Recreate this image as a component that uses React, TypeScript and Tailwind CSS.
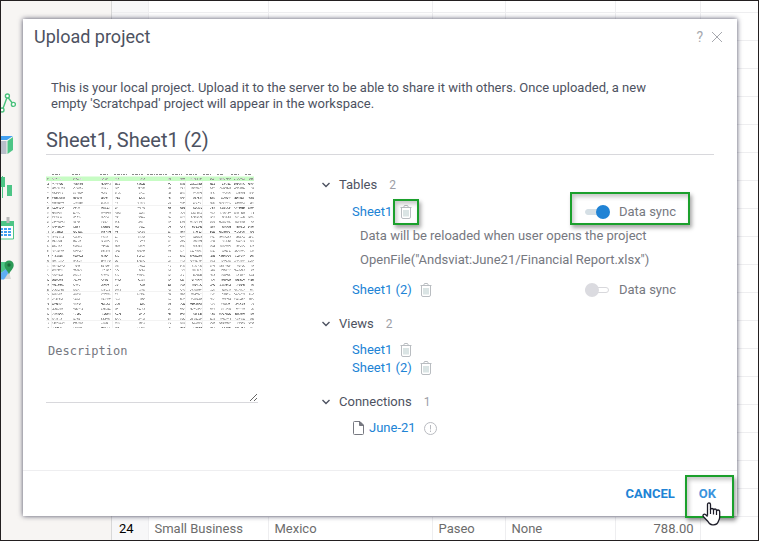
import { useState } from "react";

const columns = [
  { width: "w-[120px]", text: "Small Business", align: "text-left" },
  { width: "w-[164px]", text: "Mexico", align: "text-left" },
  { width: "w-[73px]", text: "Paseo", align: "text-left" },
  { width: "w-[110px]", text: "None", align: "text-left" },
  { width: "w-[85px]", text: "788.00", align: "text-right" },
];

function ChartIcon() {
  return (
    <svg width="15" height="24" viewBox="0 0 15 24" fill="none" stroke="#48c07b" strokeWidth="1.4">
      <path d="M2 17.5 L5.8 7 M7.2 6.8 L11.5 12.2" />
      <circle cx="6.4" cy="5" r="2" fill="#fff" />
      <circle cx="12.4" cy="13.4" r="2" fill="#fff" />
      <circle cx="1" cy="19" r="2" fill="#fff" />
    </svg>
  );
}

function CubeIcon() {
  return (
    <svg width="15" height="24" viewBox="0 0 15 24">
      <path d="M0 3 H12 L6 7 H0Z" fill="#42a0f0" />
      <path d="M12 4 V17 L6.500 21 V8Z" fill="#4dc586" />
      <rect y="8" width="5.500" height="13" fill="#b9bfca" />
    </svg>
  );
}

function CandlesIcon() {
  return (
    <svg width="15" height="24" viewBox="0 0 15 24" fill="#4dc586">
      <rect x="0" y="2" width="4" height="10" />
      <rect x="1" y="1" width="1" height="22" />
      <rect x="6" y="10" width="5" height="11" />
    </svg>
  );
}

function CalendarIcon() {
  return (
    <svg width="15" height="24" viewBox="0 0 15 24">
      <path d="M0 4 H13 V22.500 H0Z" fill="#fff" />
      <path d="M0 4 H13 V9 H0Z" fill="#4dc586" />
      <path d="M0 22 H12.500 V5" fill="none" stroke="#4dc586" />
      <rect x="5.500" y="0" width="3" height="6" fill="#b9b9b9" />
      <g fill="#42a0f0">
        <rect x="0" y="11" width="2" height="2" />
        <rect x="3" y="11" width="3" height="2" />
        <rect x="7" y="11" width="3" height="2" />
        <rect x="0" y="14" width="2" height="2" />
        <rect x="3" y="14" width="3" height="2" />
        <rect x="7" y="14" width="3" height="2" />
        <rect x="0" y="17" width="2" height="2" />
        <rect x="3" y="17" width="3" height="2" />
        <rect x="7" y="17" width="3" height="2" />
      </g>
    </svg>
  );
}

function MapIcon() {
  return (
    <svg width="15" height="24" viewBox="0 0 15 24">
      <path d="M0 3 H6 V10 L0 14Z" fill="#4dc586" />
      <path d="M0 16 L7 9 L10 20 H0Z" fill="#fff" />
      <path d="M2 20 L8 13 L10 20Z" fill="#d9d6d3" />
      <path d="M0 14 L5 10 L8 13 L3 20.500 H0Z" fill="#5eaef3" />
      <path d="M8 15.500 C7 12 3.500 10 3.500 6 A4.600 4.600 0 0 1 12.700 6 C12.700 10 9 12 8 15.500Z" fill="#2c9a57" />
      <circle cx="8" cy="6" r="1.700" fill="#1d6b3b" />
    </svg>
  );
}

function TrashIcon() {
  return (
    <svg width="12" height="14" viewBox="0 0 12 14" fill="none" stroke="#b9bdc1">
      <path d="M0.500 2.500 H11.500 M3.500 2.500 L4.500 0.500 H7.500 L8.500 2.500 M1.500 3 V12 Q1.500 13.500 3 13.500 H9 Q10.500 13.500 10.500 12 V3" />
      <path d="M4 5 V11.500 M6 5 V11.500 M8 5 V11.500" stroke="#b5c9c9" />
    </svg>
  );
}

function Chevron() {
  return (
    <svg width="10" height="6" viewBox="0 0 10 6" fill="none" stroke="#4d5261" strokeWidth="1.400">
      <path d="M1.500 1 L5 4.500 L8.500 1" />
    </svg>
  );
}

function SectionHead({ title, count }: { title: string; count: number }) {
  return (
    <button type="button" className="flex h-[18px] items-center text-[#4d5261]">
      <Chevron />
      <span className="ml-2">{title}</span>
      <span className="ml-3 text-xs text-[#9c9ea6]">{count}</span>
    </button>
  );
}

function Highlight({ className }: { className: string }) {
  return (
    <span
      className={`pointer-events-none absolute border-2 border-[#1ba02c] shadow-[2px_3px_4px_rgba(0,0,0,0.35),inset_2px_3px_4px_rgba(0,0,0,0.22)] ${className}`}
    />
  );
}

function Item({ name, marked = false }: { name: string; marked?: boolean }) {
  return (
    <div className="flex h-[18px] items-center gap-2">
      <a href="#sheet" className="text-[#2083d5]">{name}</a>
      <button type="button" aria-label={`Remove ${name}`} className="relative">
        <TrashIcon />
        {marked && <Highlight className="-inset-x-[7px] -inset-y-[6px]" />}
      </button>
    </div>
  );
}

function SyncSwitch({ initial, marked = false }: { initial: boolean; marked?: boolean }) {
  const [on, setOn] = useState(initial);
  return (
    <label className="relative flex h-[18px] items-center gap-[10px] text-[#76787f]">
      <input
        type="checkbox"
        checked={on}
        onChange={() => setOn(!on)}
        className="relative h-[6px] w-6 appearance-none rounded-full border border-[#d8d8dc] bg-white before:absolute before:-top-[5px] before:-left-px before:size-[14px] before:rounded-full before:bg-[#dbdbe0] checked:border-[#d5dfe5] checked:bg-[#d5dfe5] checked:before:left-[10px] checked:before:bg-[#2083d5]"
      />
      Data sync
      {marked && <Highlight className="-top-[11px] -right-[14px] -bottom-[4px] -left-[15px]" />}
    </label>
  );
}

const previewColumns = [
  { x: 1, w: 2 },
  { x: 6, w: 13 },
  { x: 27, w: 10 },
  { x: 55, w: 10 },
  { x: 69, w: 6 },
  { x: 91, w: 8, right: true },
  { x: 122, w: 3, right: true },
  { x: 134, w: 5, right: true },
  { x: 144, w: 12, right: true },
  { x: 164, w: 5, right: true },
  { x: 173, w: 12, right: true },
  { x: 188, w: 11, right: true },
  { x: 202, w: 6, right: true },
];

const previewHead = [
  [6, 8], [26, 8], [54, 9], [68, 13], [86, 11], [101, 21], [126, 10], [140, 12], [157, 9], [171, 6], [185, 8], [199, 7],
];

const shades = ["#888", "#c4c4c4", "#a6a6a6", "#dcdcdc", "#707070", "#cfcfcf", "#b0b0b0", "#e6e6e6", "#999"];

function noise(a: number, b: number, c: number) {
  const v = Math.sin(a * 12.9898 + b * 78.233 + c * 37.719) * 43758.5453;
  return v - Math.floor(v);
}

function Preview() {
  const marks = [];
  for (let row = 0; row < 32; row++) {
    const y = Math.round(3.8 + row * 4.82);
    const strength = row % 5 === 1 || row % 6 === 4 ? 1 : 0.7;
    previewColumns.forEach((col, c) => {
      const width = col.w <= 5 ? col.w : col.w - Math.floor(noise(row, c, 99) * 4);
      const start = col.right ? col.x + col.w - width : col.x;
      for (let x = 0; x < width; x++) {
        for (let dy = 0; dy < 2; dy++) {
          const k = Math.floor(noise(row, c * 20 + x, dy) * 11);
          if (k > 8) continue;
          marks.push(
            <rect
              key={`${row}-${c}-${x}-${dy}`}
              x={start + x}
              y={y + dy}
              width="1"
              height="1"
              fill={shades[k]}
              opacity={strength}
            />,
          );
        }
      }
    });
  }
  return (
    <svg viewBox="0 0 208 154" className="h-[154px] w-[208px]" role="img" aria-label="Sheet preview">
      <rect y="2.500" width="208" height="4.500" fill="#c7fcc4" />
      {[32, 60, 89, 118, 147].map((y) => (
        <rect key={y} y={y - 1} width="208" height="1" fill="#f3f3f3" />
      ))}
      <path d="M5.500 7 V154 M66.500 7 V154 M139.500 7 V154 M156.500 7 V154" stroke="#f3f3f3" />
      {previewHead.map(([x, w]) => (
        <path key={x} d={`M${x} 0.500 H${x + w}`} stroke="#888" strokeDasharray="2 1 3 1 1 1" />
      ))}
      {marks}
    </svg>
  );
}

function HandCursor() {
  return (
    <svg width="19" height="24" viewBox="0 0 19 24" className="pointer-events-none absolute top-[17px] left-[3px]">
      <path
        d="M5.500 13.500 V2.500 Q5.500 1 7 1 Q8.500 1 8.500 2.500 V7.500 Q8.500 6.500 10 6.500 Q11.500 6.500 11.500 8 Q11.700 7 13 7 Q14.500 7 14.500 8.800 Q15 8 16 8 Q17.700 8 17.700 10 V15 Q17.700 17 16.500 19 Q15.500 22.800 11.500 22.800 H10.500 Q7.500 22.800 6 19.500 L1.500 14.800 Q0.500 13.300 1.500 12.500 Q2.500 11.800 3.800 12.800 L5.500 14.500"
        fill="#fff"
        stroke="#1c1c28"
        strokeWidth="1.300"
        strokeLinejoin="round"
      />
      <path d="M8.500 7 V12 M11.500 8 V12.500 M14.500 9 V13" stroke="#1c1c28" strokeWidth="1.200" />
    </svg>
  );
}

export default function App() {
  return (
    <div className="relative h-screen overflow-hidden border border-[#231f20] bg-white font-['Roboto','Liberation_Sans',sans-serif] text-[13px] leading-[18px]">
      <div className="flex h-full">
        <nav className="flex w-[111px] shrink-0 flex-col gap-[18px] border-r border-[#d8d8d8] bg-[#f7f5f3] pt-[90px]">
          <ChartIcon />
          <CubeIcon />
          <CandlesIcon />
          <CalendarIcon />
          <MapIcon />
        </nav>
        <table className="w-full table-fixed border-collapse self-start text-[#6c6c6c]">
          <tbody>
            {Array.from({ length: 20 }, (_, i) => (
              <tr key={i} className={i === 0 ? "h-[11px] border-b border-[#eeeef0]" : "h-[28px] border-b border-[#eeeef0]"}>
                <td className="w-[36px] border-r border-[#eeeef0] bg-[#f7f7f8] pt-[3px] pr-[14px] text-right align-top text-black">
                  {i === 19 ? "24" : ""}
                </td>
                {columns.map((c) => (
                  <td
                    key={c.text}
                    className={`${c.width} ${c.align} border-r border-[#eeeef0] px-[6px] pt-[3px] align-top`}
                  >
                    {i === 19 ? c.text : ""}
                  </td>
                ))}
                <td />
              </tr>
            ))}
          </tbody>
        </table>
      </div>

      <div className="absolute inset-0 flex pt-[18px] pr-[21px] pb-[24px] pl-[22px]">
        <div
          role="dialog"
          aria-label="Upload project"
          className="flex w-full flex-col bg-white shadow-[0_0_5px_rgba(20,20,50,0.75)]"
        >
          <header className="flex h-9 items-center pr-[14px] pl-[11px]">
            <h1 className="flex-1 text-[18px] leading-6 text-[#4d5261]">Upload project</h1>
            <button type="button" aria-label="Help" className="text-[14px] text-[#a6a8ae]">?</button>
            <button type="button" aria-label="Close" className="ml-2">
              <svg width="12" height="12" viewBox="0 0 12 12" stroke="#a6a8ae" fill="none">
                <path d="M1 1 L11 11 M11 1 L1 11" />
              </svg>
            </button>
          </header>

          <main className="flex-1 px-[23px] pt-[25px]">
            <p className="pr-12 pl-[5px] leading-4 text-[#4d5261]">
              This is your local project. Upload it to the server to be able to share it with others. Once uploaded, a new
              empty 'Scratchpad' project will appear in the workspace.
            </p>
            <input
              aria-label="Project name"
              defaultValue="Sheet1, Sheet1 (2)"
              className="mt-[13px] block h-[30px] w-full border-b border-[#d8d8dc] text-[20px] text-[#4d5261] outline-none"
            />
            <div className="mt-[19px] flex gap-[63px]">
              <div className="w-[212px] shrink-0">
                <Preview />
                <textarea
                  aria-label="Description"
                  placeholder="Description"
                  className="mt-[13px] block h-[62px] w-full resize border-b border-[#d8d8dc] px-[2px] pt-px font-['DejaVu_Sans_Mono',monospace] text-xs leading-[18px] outline-none placeholder:text-[#76787f]"
                />
              </div>

              <div className="flex-1 pt-[2px]">
                <section>
                  <SectionHead title="Tables" count={2} />
                  <div className="mt-[9px] flex justify-between pr-[38px] pl-[31px]">
                    <Item name="Sheet1" marked />
                    <SyncSwitch initial marked />
                  </div>
                  <div className="mt-[3px] pl-[39px] leading-6 text-[#76787f]">
                    <p>Data will be reloaded when user opens the project</p>
                    <p>OpenFile("Andsviat:June21/Financial Report.xlsx")</p>
                  </div>
                  <div className="mt-[9px] flex justify-between pr-[38px] pl-[31px]">
                    <Item name="Sheet1 (2)" />
                    <SyncSwitch initial={false} />
                  </div>
                </section>
                <section className="mt-4">
                  <SectionHead title="Views" count={2} />
                  <div className="mt-2 pl-[31px]">
                    <Item name="Sheet1" />
                    <Item name="Sheet1 (2)" />
                  </div>
                </section>
                <section className="mt-4">
                  <SectionHead title="Connections" count={1} />
                  <div className="mt-2 flex h-[18px] items-center pl-[32px]">
                    <svg width="11" height="14" viewBox="0 0 11 14" fill="none" stroke="#777981">
                      <path d="M0.500 1.500 Q0.500 0.500 1.500 0.500 H7 L10.500 4 V12.500 Q10.500 13.500 9.500 13.500 H1.500 Q0.500 13.500 0.500 12.500Z" />
                      <path d="M6.500 0.500 V4.500 H10.500Z" fill="#777981" />
                    </svg>
                    <a href="#connection" className="ml-[5px] text-[#2083d5]">June-21</a>
                    <svg width="13" height="13" viewBox="0 0 13 13" fill="none" stroke="#b9bbc0" className="ml-2">
                      <circle cx="6.500" cy="6.500" r="6" />
                      <path d="M6.500 3 V7.500 M6.500 8.500 V10" />
                    </svg>
                  </div>
                </section>
              </div>
            </div>
          </main>

          <footer className="flex h-[46px] items-center justify-end gap-6 border-t border-[#eeeef0] pr-[21px] font-bold text-[#2083d5]">
            <button type="button">CANCEL</button>
            <button type="button" className="relative text-[#3a93dd]">
              OK
              <Highlight className="-top-[10px] -right-[18px] -bottom-[15px] -left-[14px]" />
              <HandCursor />
            </button>
          </footer>
        </div>
      </div>
    </div>
  );
}
